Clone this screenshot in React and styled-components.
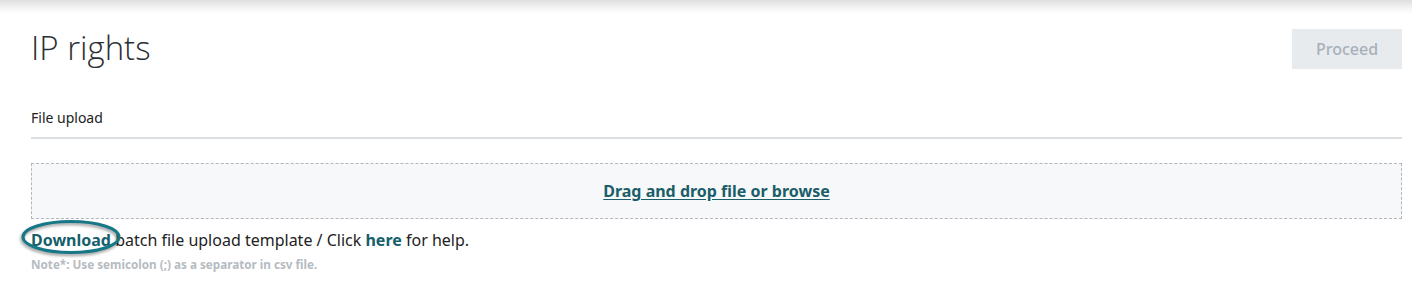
import React from "react";
import styled, { createGlobalStyle } from "styled-components";

const Global = createGlobalStyle`
  html, body { margin: 0; padding: 0; background: #fff; }
  body { font-family: "Noto Sans", "Open Sans", Arial, sans-serif; color: #222; }
`;

const TopShadow = styled.div`
  height: 14px;
  background: linear-gradient(to bottom, #dedede 0%, #f3f3f3 55%, #ffffff 100%);
`;

const Page = styled.main`
  padding: 15px 10px 0 31px;
`;

const Header = styled.header`
  display: flex;
  justify-content: space-between;
  align-items: flex-start;
  height: 40px;
`;

const Title = styled.h1`
  margin: 0;
  font-family: "Open Sans", "Noto Sans", sans-serif;
  font-size: 33px;
  line-height: 38px;
  font-weight: 300;
  color: #2a2f33;
`;

const Button = styled.button`
  width: 110px;
  height: 40px;
  border: none;
  background: #e8ebee;
  color: #a7b0b9;
  font-family: inherit;
  font-size: 16px;
  font-weight: 500;
  cursor: default;
`;

const TabBar = styled.div`
  margin-top: 38px;
  border-bottom: 2px solid #dcdfe2;
  padding-bottom: 9px;
  line-height: 20px;
`;

const TabLabel = styled.span`
  font-size: 14px;
  line-height: 20px;
  color: #222;
`;

const DropZone = styled.div`
  margin-top: 24px;
  border: 1px dashed #b3b7bb;
  background: #f7f8f9;
  padding: 16px 0;
  display: flex;
  justify-content: center;
`;

const Link = styled.a`
  color: ${(p) => p.$color || "#15606b"};
  font-weight: 700;
  text-decoration: ${(p) => (p.$underline ? "underline" : "none")};
  text-underline-offset: 2px;
  cursor: pointer;
`;

const DropText = styled.span`
  font-size: 16px;
  line-height: 22px;
`;

const HelpLine = styled.p`
  margin: 10px 0 0;
  font-size: 16px;
  line-height: 22px;
  color: #222;
`;

const Annotated = styled.span`
  position: relative;
  display: inline-block;
`;

const Ring = styled.svg`
  position: absolute;
  left: -11px;
  top: -11px;
  width: 102px;
  height: 38px;
  overflow: visible;
  pointer-events: none;
  filter: drop-shadow(-1px 2px 1.5px rgba(0, 0, 0, 0.4));
`;

const Note = styled.p`
  margin: 5px 0 0;
  font-size: 11.7px;
  line-height: 16px;
  font-weight: 700;
  color: #b6bbc1;
`;

export default function App() {
  return (
    <>
      <Global />
      <TopShadow />
      <Page>
        <Header>
          <Title>IP rights</Title>
          <Button disabled>Proceed</Button>
        </Header>
        <TabBar>
          <TabLabel>File upload</TabLabel>
        </TabBar>
        <DropZone>
          <DropText>
            <Link $underline $color="#1b5e69">Drag and drop file or browse</Link>
          </DropText>
        </DropZone>
        <HelpLine>
          <Annotated>
            <Link>Download</Link>
            <Ring viewBox="0 0 102 38">
              <ellipse cx="51" cy="19" rx="48" ry="15.5" fill="none" stroke="#167786" strokeWidth="3" />
            </Ring>
          </Annotated>{" "}
          batch file upload template / Click <Link>here</Link> for help.
        </HelpLine>
        <Note>Note*: Use semicolon (;) as a separator in csv file.</Note>
      </Page>
    </>
  );
}
